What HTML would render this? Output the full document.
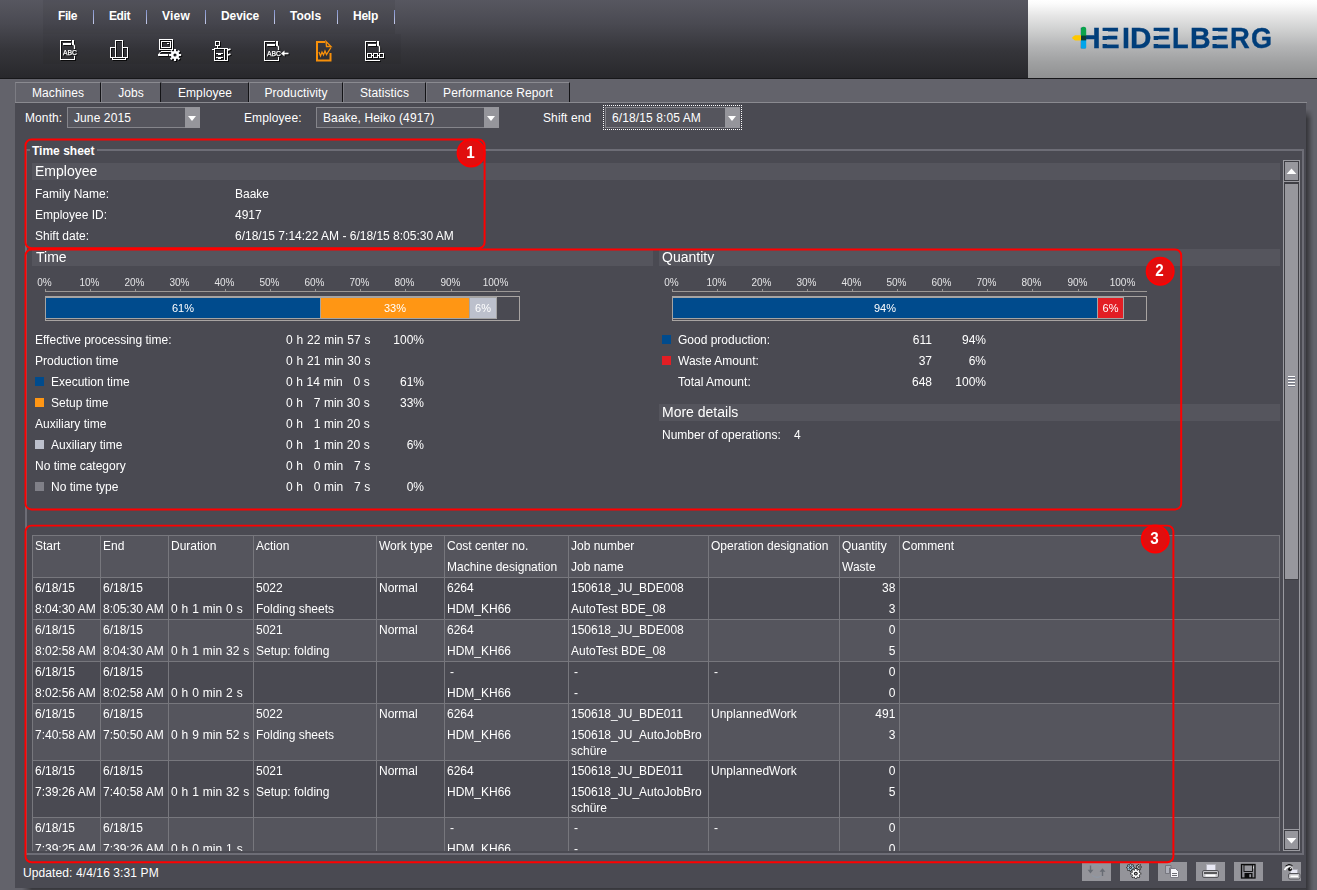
<!DOCTYPE html><html><head><meta charset="utf-8"><title>Time sheet</title><style>
*{margin:0;padding:0;box-sizing:border-box}
html,body{width:1317px;height:890px;overflow:hidden;background:#63636b}
body{font-family:"Liberation Sans",sans-serif;font-size:12px;line-height:14px;color:#fff;position:relative}
div,svg{position:absolute}
.t{white-space:pre;}
.b{font-weight:bold}
#hdr{left:0;top:0;width:1317px;height:79px;background:linear-gradient(#575760 0,#4a4a52 30%,#35353a 65%,#28282c 100%);border-bottom:1px solid #17171a}
#mb{left:43px;top:0;width:352px;height:34px;background:rgba(0,0,0,.06)}
#tb{left:43px;top:34px;width:358px;height:30px;background:rgba(0,0,0,.04)}
#logo{left:1028px;top:0;width:289px;height:79px;background:linear-gradient(#fff 0,#fbfbfb 5%,#e6e6e6 20%,#cdcece 40%,#b3b4b5 60%,#9fa0a1 80%,#909192 100%);border-bottom:1px solid #17171a}
.sep{background:linear-gradient(#8090cc,#c4cae8)}
.tab{letter-spacing:.1px;top:82px;height:21px;border:1px solid #8a8a90;border-left-color:#7c7c83;border-right-color:#131316;background:#63636b;text-align:center;line-height:21px;font-size:12px}
#panel{left:15px;top:103px;width:1291px;height:785px;background:#4a4a52}
#shr{left:1306px;top:109px;width:8px;height:781px;background:linear-gradient(to right,rgba(0,0,0,.46),rgba(0,0,0,.3) 35%,rgba(0,0,0,.1) 70%,rgba(0,0,0,0));-webkit-mask-image:linear-gradient(to bottom,transparent,#000 10px);mask-image:linear-gradient(to bottom,transparent,#000 10px)}
#shb{left:22px;top:888px;width:1284px;height:8px;background:linear-gradient(to bottom,rgba(0,0,0,.46),rgba(0,0,0,.3) 35%,rgba(0,0,0,.1) 70%,rgba(0,0,0,0));-webkit-mask-image:linear-gradient(to right,transparent,#000 10px);mask-image:linear-gradient(to right,transparent,#000 10px)}
#pt{left:15px;top:102px;width:1292px;height:1px;background:#8a8a90}
.sel{height:21px;border:1px solid #85858b;background:#55555d}
.sel i{position:absolute;right:-1px;top:-1px;width:15px;height:21px;background:#95959b}
.sel i:after{content:"";position:absolute;left:3px;top:9px;border:4.5px solid transparent;border-top:5px solid #fff;border-bottom:0}
.sh{height:16px;background:#55555d}
.red{border:2px solid #f00000;border-radius:7px}
.num{width:29px;height:29px;color:#fff;font-weight:bold;font-size:16px;line-height:29px;text-align:center;transform:scaleX(.95)}
.btn{top:862px;height:19px;width:29px;background:#94949a}
</style></head><body>
<div id="hdr"></div><div id="mb"></div><div id="tb"></div><div id="logo"></div>
<div class="t b" style="left:58px;top:9px;letter-spacing:-0.4px;">File</div>
<div class="t b" style="left:109px;top:9px;letter-spacing:-0.4px;">Edit</div>
<div class="t b" style="left:162px;top:9px;letter-spacing:0.2px;">View</div>
<div class="t b" style="left:221px;top:9px;letter-spacing:-0.1px;">Device</div>
<div class="t b" style="left:290px;top:9px;letter-spacing:0px;">Tools</div>
<div class="t b" style="left:353px;top:9px;letter-spacing:-0.25px;">Help</div>
<div class="sep" style="left:93px;top:10px;width:1px;height:14px;"></div>
<div class="sep" style="left:146px;top:10px;width:1px;height:14px;"></div>
<div class="sep" style="left:205px;top:10px;width:1px;height:14px;"></div>
<div class="sep" style="left:274px;top:10px;width:1px;height:14px;"></div>
<div class="sep" style="left:337px;top:10px;width:1px;height:14px;"></div>
<div class="sep" style="left:394px;top:10px;width:1px;height:14px;"></div>
<svg width="440" height="78" style="left:0;top:0;filter:drop-shadow(1px 1px 0 rgba(0,0,0,.75))" shape-rendering="crispEdges"><g transform="translate(60,40)" fill="none" stroke="#fff" stroke-width="1"><path d="M0.5 0 V19.5 H14.5 V16"/><path d="M0 0.5 H11"/><path d="M13 0 V4.5" stroke-width="2"/><path d="M13.5 4.5 L14.5 6 V9" shape-rendering="auto" stroke-width="1.3"/><rect x="3" y="3" width="7.5" height="2" fill="#fff" stroke="none"/><text x="3" y="15" font-family="Liberation Sans,sans-serif" font-size="7" fill="#fff" stroke="#fff" stroke-width=".25" textLength="14" lengthAdjust="spacingAndGlyphs">ABC</text></g><g fill="none" stroke="#fff" stroke-width="1"><rect x="115.5" y="40.5" width="7" height="17"/><path d="M115 47.5 H110.5 V57.5 H127.5 V47.5 H123"/><path d="M112.5 58 V59.5 H125.5 V58"/></g><g fill="none" stroke="#fff" stroke-width="1"><rect x="159.5" y="39.5" width="13" height="10" rx="1"/><rect x="161.5" y="41.5" width="9" height="6" rx="1"/><path d="M167 43.5 H169"/><path d="M161 51.5 H169.5"/><path d="M160.5 52 L158.5 54.5" shape-rendering="auto"/><path d="M158 55 H168" stroke-width="2"/></g><g style="filter:drop-shadow(0 0 .5px #222)"><path d="M181.11 53.93 L181.11 56.07 L179.08 55.98 L178.58 57.19 L180.07 58.57 L178.57 60.07 L177.19 58.58 L175.98 59.08 L176.07 61.11 L173.93 61.11 L174.02 59.08 L172.81 58.58 L171.43 60.07 L169.93 58.57 L171.42 57.19 L170.92 55.98 L168.89 56.07 L168.89 53.93 L170.92 54.02 L171.42 52.81 L169.93 51.43 L171.43 49.93 L172.81 51.42 L174.02 50.92 L173.93 48.89 L176.07 48.89 L175.98 50.92 L177.19 51.42 L178.57 49.93 L180.07 51.43 L178.58 52.81 L179.08 54.02Z M173.4 55 a1.6 1.6 0 1 0 3.2 0 a1.6 1.6 0 1 0 -3.2 0Z" fill="#fff" fill-rule="evenodd" shape-rendering="auto"/></g><g fill="none" stroke="#fff" stroke-width="1"><rect x="215.5" y="41.5" width="4" height="4"/><path d="M217.5 46 V48"/><rect x="214.5" y="48.5" width="13" height="12"/><path d="M224.5 48 V61"/><path d="M212.3 49.5 H214" stroke-width="1.6"/><path d="M228 50 L230.5 49 M228 55 L230.5 54" stroke-width="1.6" shape-rendering="auto"/><path d="M216 53.5 H223 M218 54.5 H221 M216 57.5 H223 M218 58.5 H221"/></g><g transform="translate(264,41)" fill="none" stroke="#fff" stroke-width="1"><path d="M0.5 0 V19.5 H14.5 V16"/><path d="M0 0.5 H11"/><path d="M13 0 V4.5" stroke-width="2"/><path d="M13.5 4.5 L14.5 6 V9" shape-rendering="auto" stroke-width="1.3"/><rect x="3" y="3" width="7.5" height="2" fill="#fff" stroke="none"/><text x="3" y="15" font-family="Liberation Sans,sans-serif" font-size="7" fill="#fff" stroke="#fff" stroke-width=".25" textLength="14" lengthAdjust="spacingAndGlyphs">ABC</text></g><path d="M281 53.5 L284.5 50.5 V56.5Z" fill="#fff" shape-rendering="auto"/><path d="M284 53.5 H288.5" stroke="#fff" stroke-width="1.6" shape-rendering="auto"/><g transform="translate(365,41)" fill="none" stroke="#fff" stroke-width="1"><path d="M0.5 0 V19.5 H15"/><path d="M0 0.5 H11"/><path d="M13 0 V4.5" stroke-width="2"/><path d="M13.5 4.5 L14.5 6 V11" shape-rendering="auto" stroke-width="1.3"/><rect x="3" y="3" width="7.5" height="2" fill="#fff" stroke="none"/><rect x="2.5" y="12.5" width="4" height="4"/><rect x="8.5" y="12.5" width="4" height="4"/><rect x="14.5" y="12.5" width="4" height="4"/><path d="M6 14.5 H9 M12 14.5 H15"/></g></svg><svg width="24" height="26" style="left:312px;top:38px" viewBox="312 38 24 26"><g fill="none" stroke="#f7900a" stroke-width="2"><path d="M325 42 H317 V60.5 H330.5 V53" stroke-linejoin="miter"/><path d="M326 41.5 L331 46.5 H326.5Z" stroke-width="1.3"/><path d="M319 52 L320.5 56 L322 52 L323.5 55 L325 51 L326.5 54.5 L331 47.5" stroke-width="1.3"/></g></svg>
<div id="wm" style="left:1028px;top:21px;width:289px;height:34px;will-change:transform;font-weight:bold;font-size:28.8px;line-height:34px;color:#003e7a;-webkit-text-stroke:0.35px #003e7a"><span style="position:absolute;left:51.01px;top:0;transform:translateY(-.25px) scaleX(1.043);transform-origin:0 0">H</span><span style="position:absolute;left:73.26px;top:0;transform:translateY(-.25px) scaleX(0.966);transform-origin:0 0">E</span><span style="position:absolute;left:93.50px;top:0;transform:translateY(-.25px) scaleX(0.997);transform-origin:0 0">I</span><span style="position:absolute;left:101.94px;top:0;transform:translateY(-.25px) scaleX(1.029);transform-origin:0 0">D</span><span style="position:absolute;left:123.71px;top:0;transform:translateY(-.25px) scaleX(0.991);transform-origin:0 0">E</span><span style="position:absolute;left:143.90px;top:0;transform:translateY(-.25px) scaleX(0.945);transform-origin:0 0">L</span><span style="position:absolute;left:161.82px;top:0;transform:translateY(-.25px) scaleX(0.989);transform-origin:0 0">B</span><span style="position:absolute;left:182.73px;top:0;transform:translateY(-.25px) scaleX(0.929);transform-origin:0 0">E</span><span style="position:absolute;left:202.49px;top:0;transform:translateY(-.25px) scaleX(0.950);transform-origin:0 0">R</span><span style="position:absolute;left:223.08px;top:0;transform:translateY(-.25px) scaleX(0.941);transform-origin:0 0">G</span></div>
<div style="left:1102.1px;top:31.45px;width:6.2px;height:4.35px;background:linear-gradient(#fff 0,#fbfbfb 5%,#e6e6e6 20%,#cdcece 40%,#b3b4b5 60%,#9fa0a1 80%,#909192 100%) 0 -31.45px/100% 78px no-repeat"></div>
<div style="left:1102.1px;top:39.65px;width:6.2px;height:4.55px;background:linear-gradient(#fff 0,#fbfbfb 5%,#e6e6e6 20%,#cdcece 40%,#b3b4b5 60%,#9fa0a1 80%,#909192 100%) 0 -39.65px/100% 78px no-repeat"></div>
<div style="left:1152.6px;top:31.45px;width:6.2px;height:4.35px;background:linear-gradient(#fff 0,#fbfbfb 5%,#e6e6e6 20%,#cdcece 40%,#b3b4b5 60%,#9fa0a1 80%,#909192 100%) 0 -31.45px/100% 78px no-repeat"></div>
<div style="left:1152.6px;top:39.65px;width:6.2px;height:4.55px;background:linear-gradient(#fff 0,#fbfbfb 5%,#e6e6e6 20%,#cdcece 40%,#b3b4b5 60%,#9fa0a1 80%,#909192 100%) 0 -39.65px/100% 78px no-repeat"></div>
<div style="left:1211.5px;top:31.45px;width:6.2px;height:4.35px;background:linear-gradient(#fff 0,#fbfbfb 5%,#e6e6e6 20%,#cdcece 40%,#b3b4b5 60%,#9fa0a1 80%,#909192 100%) 0 -31.45px/100% 78px no-repeat"></div>
<div style="left:1211.5px;top:39.65px;width:6.2px;height:4.55px;background:linear-gradient(#fff 0,#fbfbfb 5%,#e6e6e6 20%,#cdcece 40%,#b3b4b5 60%,#9fa0a1 80%,#909192 100%) 0 -39.65px/100% 78px no-repeat"></div>
<svg style="left:1068px;top:22px" width="24" height="32" viewBox="1068 22 24 32"><path d="M1082 35.2 H1075 L1072.3 37.2 V38.5 L1075 40.5 H1082Z" fill="#ffc800"/><rect x="1081" y="26.8" width="5.2" height="12" rx="2.6" fill="#0aa54b"/><rect x="1081" y="38" width="5.2" height="10.4" rx="0.8" fill="#00a5eb"/><rect x="1081" y="35.6" width="5.2" height="4.8" fill="#0c3c34"/></svg>
<div class="tab" style="left:15px;width:86px">Machines</div>
<div class="tab" style="left:101px;width:60px">Jobs</div>
<div class="tab" style="left:161px;width:88px;background:#4a4a52;border-left-color:#4a4a52">Employee</div>
<div class="tab" style="left:249px;width:94px">Productivity</div>
<div class="tab" style="left:343px;width:83px">Statistics</div>
<div class="tab" style="left:426px;width:144px">Performance Report</div>
<div id="shr"></div><div id="shb"></div><div id="panel"></div><div id="pt"></div>
<div class="t" style="left:25px;top:111px;letter-spacing:.1px;">Month:</div>
<div class="sel" style="left:67px;top:107px;width:133px"><i></i></div>
<div class="t" style="left:74px;top:111px;letter-spacing:.1px;">June 2015</div>
<div class="t" style="left:244px;top:111px;letter-spacing:.1px;">Employee:</div>
<div class="sel" style="left:316px;top:107px;width:183px"><i></i></div>
<div class="t" style="left:323px;top:111px;letter-spacing:.1px;">Baake, Heiko (4917)</div>
<div class="t" style="left:543px;top:111px;letter-spacing:.1px;">Shift end</div>
<div style="left:603px;top:105px;width:139px;height:25px;border:1px dotted #fff"></div>
<div class="sel" style="left:605px;top:107px;width:135px"><i></i></div>
<div class="t" style="left:612px;top:111px;letter-spacing:.1px;">6/18/15 8:05 AM</div>
<div style="left:25px;top:149px;width:1279px;height:706px;border:2px solid #6d6d76"></div>
<div style="left:30px;top:143px;width:67px;height:14px;background:#4a4a52;"></div>
<div class="t b" style="left:32px;top:144px;">Time sheet</div>
<div class="t" style="left:23px;top:866px;letter-spacing:.1px;">Updated: 4/4/16 3:31 PM</div>
<div id="rep" style="left:0;top:0;width:1317px;height:890px;will-change:transform">
<div class="sh" style="left:32px;top:163px;width:1248px;height:17px;"></div>
<div class="t" style="left:35px;top:163px;font-size:14px;line-height:16px;">Employee</div>
<div class="sh" style="left:32px;top:249px;width:621px;height:17px;"></div>
<div class="t" style="left:36px;top:249px;font-size:14px;line-height:16px;">Time</div>
<div class="sh" style="left:659px;top:249px;width:621px;height:17px;"></div>
<div class="t" style="left:662px;top:249px;font-size:14px;line-height:16px;">Quantity</div>
<div class="sh" style="left:659px;top:404px;width:621px;height:17px;"></div>
<div class="t" style="left:662px;top:404px;font-size:14px;line-height:16px;">More details</div>
<div class="t" style="left:35px;top:187px;">Family Name:</div>
<div class="t" style="left:235px;top:187px;">Baake</div>
<div class="t" style="left:35px;top:208px;">Employee ID:</div>
<div class="t" style="left:235px;top:208px;">4917</div>
<div class="t" style="left:35px;top:229px;">Shift date:</div>
<div class="t" style="left:235px;top:229px;">6/18/15 7:14:22 AM - 6/18/15 8:05:30 AM</div>
<div class="t" style="left:24px;top:277px;font-size:10px;line-height:12px;width:41px;text-align:center;color:#e4e4e6;">0%</div>
<div style="left:45px;top:289px;width:1px;height:2px;background:#9c9896;"></div>
<div class="t" style="left:69px;top:277px;font-size:10px;line-height:12px;width:41px;text-align:center;color:#e4e4e6;">10%</div>
<div style="left:90px;top:289px;width:1px;height:2px;background:#9c9896;"></div>
<div class="t" style="left:114px;top:277px;font-size:10px;line-height:12px;width:41px;text-align:center;color:#e4e4e6;">20%</div>
<div style="left:135px;top:289px;width:1px;height:2px;background:#9c9896;"></div>
<div class="t" style="left:159px;top:277px;font-size:10px;line-height:12px;width:41px;text-align:center;color:#e4e4e6;">30%</div>
<div style="left:180px;top:289px;width:1px;height:2px;background:#9c9896;"></div>
<div class="t" style="left:204px;top:277px;font-size:10px;line-height:12px;width:41px;text-align:center;color:#e4e4e6;">40%</div>
<div style="left:225px;top:289px;width:1px;height:2px;background:#9c9896;"></div>
<div class="t" style="left:249px;top:277px;font-size:10px;line-height:12px;width:41px;text-align:center;color:#e4e4e6;">50%</div>
<div style="left:270px;top:289px;width:1px;height:2px;background:#9c9896;"></div>
<div class="t" style="left:294px;top:277px;font-size:10px;line-height:12px;width:41px;text-align:center;color:#e4e4e6;">60%</div>
<div style="left:315px;top:289px;width:1px;height:2px;background:#9c9896;"></div>
<div class="t" style="left:339px;top:277px;font-size:10px;line-height:12px;width:41px;text-align:center;color:#e4e4e6;">70%</div>
<div style="left:360px;top:289px;width:1px;height:2px;background:#9c9896;"></div>
<div class="t" style="left:384px;top:277px;font-size:10px;line-height:12px;width:41px;text-align:center;color:#e4e4e6;">80%</div>
<div style="left:405px;top:289px;width:1px;height:2px;background:#9c9896;"></div>
<div class="t" style="left:430px;top:277px;font-size:10px;line-height:12px;width:41px;text-align:center;color:#e4e4e6;">90%</div>
<div style="left:451px;top:289px;width:1px;height:2px;background:#9c9896;"></div>
<div class="t" style="left:475px;top:277px;font-size:10px;line-height:12px;width:41px;text-align:center;color:#e4e4e6;">100%</div>
<div style="left:496px;top:289px;width:1px;height:2px;background:#9c9896;"></div>
<div style="left:45px;top:291px;width:475px;height:1px;background:#9c9896;"></div>
<div style="left:45px;top:296px;width:475px;height:25px;background:#4a4a52;border:1px solid #a8a4a2"></div>
<div style="left:45px;top:297px;width:276px;height:22px;background:#004b8d;border:1px solid #a4a4a4"></div>
<div class="t" style="left:46px;top:302px;font-size:11px;line-height:13px;width:274px;text-align:center;">61%</div>
<div style="left:320px;top:297px;width:150px;height:22px;background:#ff9614;border:1px solid #a4a4a4"></div>
<div class="t" style="left:321px;top:302px;font-size:11px;line-height:13px;width:148px;text-align:center;">33%</div>
<div style="left:469px;top:297px;width:28px;height:22px;background:#bcc0cc;border:1px solid #a4a4a4"></div>
<div class="t" style="left:470px;top:302px;font-size:11px;line-height:13px;width:26px;text-align:center;">6%</div>
<div class="t" style="left:651px;top:277px;font-size:10px;line-height:12px;width:41px;text-align:center;color:#e4e4e6;">0%</div>
<div style="left:672px;top:289px;width:1px;height:2px;background:#9c9896;"></div>
<div class="t" style="left:696px;top:277px;font-size:10px;line-height:12px;width:41px;text-align:center;color:#e4e4e6;">10%</div>
<div style="left:717px;top:289px;width:1px;height:2px;background:#9c9896;"></div>
<div class="t" style="left:741px;top:277px;font-size:10px;line-height:12px;width:41px;text-align:center;color:#e4e4e6;">20%</div>
<div style="left:762px;top:289px;width:1px;height:2px;background:#9c9896;"></div>
<div class="t" style="left:786px;top:277px;font-size:10px;line-height:12px;width:41px;text-align:center;color:#e4e4e6;">30%</div>
<div style="left:807px;top:289px;width:1px;height:2px;background:#9c9896;"></div>
<div class="t" style="left:831px;top:277px;font-size:10px;line-height:12px;width:41px;text-align:center;color:#e4e4e6;">40%</div>
<div style="left:852px;top:289px;width:1px;height:2px;background:#9c9896;"></div>
<div class="t" style="left:876px;top:277px;font-size:10px;line-height:12px;width:41px;text-align:center;color:#e4e4e6;">50%</div>
<div style="left:897px;top:289px;width:1px;height:2px;background:#9c9896;"></div>
<div class="t" style="left:921px;top:277px;font-size:10px;line-height:12px;width:41px;text-align:center;color:#e4e4e6;">60%</div>
<div style="left:942px;top:289px;width:1px;height:2px;background:#9c9896;"></div>
<div class="t" style="left:966px;top:277px;font-size:10px;line-height:12px;width:41px;text-align:center;color:#e4e4e6;">70%</div>
<div style="left:987px;top:289px;width:1px;height:2px;background:#9c9896;"></div>
<div class="t" style="left:1011px;top:277px;font-size:10px;line-height:12px;width:41px;text-align:center;color:#e4e4e6;">80%</div>
<div style="left:1032px;top:289px;width:1px;height:2px;background:#9c9896;"></div>
<div class="t" style="left:1057px;top:277px;font-size:10px;line-height:12px;width:41px;text-align:center;color:#e4e4e6;">90%</div>
<div style="left:1078px;top:289px;width:1px;height:2px;background:#9c9896;"></div>
<div class="t" style="left:1102px;top:277px;font-size:10px;line-height:12px;width:41px;text-align:center;color:#e4e4e6;">100%</div>
<div style="left:1123px;top:289px;width:1px;height:2px;background:#9c9896;"></div>
<div style="left:672px;top:291px;width:475px;height:1px;background:#9c9896;"></div>
<div style="left:672px;top:296px;width:475px;height:25px;background:#4a4a52;border:1px solid #a8a4a2"></div>
<div style="left:672px;top:297px;width:426px;height:22px;background:#004b8d;border:1px solid #a4a4a4"></div>
<div class="t" style="left:673px;top:302px;font-size:11px;line-height:13px;width:424px;text-align:center;">94%</div>
<div style="left:1097px;top:297px;width:27px;height:22px;background:#e31e24;border:1px solid #a4a4a4"></div>
<div class="t" style="left:1098px;top:302px;font-size:11px;line-height:13px;width:25px;text-align:center;">6%</div>
<div class="t" style="left:35px;top:333px;">Effective processing time:</div>
<div class="t" style="left:286px;top:333px;word-spacing:0.5px;">0 h 22 min 57 s</div>
<div class="t" style="left:374px;top:333px;width:50px;text-align:right;">100%</div>
<div class="t" style="left:35px;top:354px;">Production time</div>
<div class="t" style="left:286px;top:354px;word-spacing:0.5px;">0 h 21 min 30 s</div>
<div style="left:35px;top:377px;width:9px;height:9px;background:#004b8d;"></div>
<div class="t" style="left:51px;top:375px;">Execution time</div>
<div class="t" style="left:286px;top:375px;word-spacing:0.25px;">0 h 14 min   0 s</div>
<div class="t" style="left:374px;top:375px;width:50px;text-align:right;">61%</div>
<div style="left:35px;top:398px;width:9px;height:9px;background:#ff9614;"></div>
<div class="t" style="left:51px;top:396px;">Setup time</div>
<div class="t" style="left:286px;top:396px;word-spacing:0.25px;">0 h   7 min 30 s</div>
<div class="t" style="left:374px;top:396px;width:50px;text-align:right;">33%</div>
<div class="t" style="left:35px;top:417px;">Auxiliary time</div>
<div class="t" style="left:286px;top:417px;word-spacing:0.25px;">0 h   1 min 20 s</div>
<div style="left:35px;top:440px;width:9px;height:9px;background:#bcc0cc;"></div>
<div class="t" style="left:51px;top:438px;">Auxiliary time</div>
<div class="t" style="left:286px;top:438px;word-spacing:0.25px;">0 h   1 min 20 s</div>
<div class="t" style="left:374px;top:438px;width:50px;text-align:right;">6%</div>
<div class="t" style="left:35px;top:459px;">No time category</div>
<div class="t" style="left:286px;top:459px;word-spacing:0.25px;">0 h   0 min   7 s</div>
<div style="left:35px;top:482px;width:9px;height:9px;background:#808088;"></div>
<div class="t" style="left:51px;top:480px;">No time type</div>
<div class="t" style="left:286px;top:480px;word-spacing:0.25px;">0 h   0 min   7 s</div>
<div class="t" style="left:374px;top:480px;width:50px;text-align:right;">0%</div>
<div style="left:662px;top:335px;width:9px;height:9px;background:#004b8d;"></div>
<div class="t" style="left:678px;top:333px;">Good production:</div>
<div class="t" style="left:882px;top:333px;width:50px;text-align:right;">611</div>
<div class="t" style="left:936px;top:333px;width:50px;text-align:right;">94%</div>
<div style="left:662px;top:356px;width:9px;height:9px;background:#e31e24;"></div>
<div class="t" style="left:678px;top:354px;">Waste Amount:</div>
<div class="t" style="left:882px;top:354px;width:50px;text-align:right;">37</div>
<div class="t" style="left:936px;top:354px;width:50px;text-align:right;">6%</div>
<div class="t" style="left:678px;top:375px;">Total Amount:</div>
<div class="t" style="left:882px;top:375px;width:50px;text-align:right;">648</div>
<div class="t" style="left:936px;top:375px;width:50px;text-align:right;">100%</div>
<div class="t" style="left:662px;top:428px;">Number of operations:</div>
<div class="t" style="left:794px;top:428px;">4</div>
<div style="left:32px;top:535px;width:1248px;height:316px;overflow:hidden">
<div style="left:0px;top:0px;width:69px;height:43px;border:1px solid #77777d;background:#55555d"></div>
<div class="t" style="left:3px;top:4px;">Start</div>
<div style="left:68px;top:0px;width:69px;height:43px;border:1px solid #77777d;background:#55555d"></div>
<div class="t" style="left:71px;top:4px;">End</div>
<div style="left:136px;top:0px;width:86px;height:43px;border:1px solid #77777d;background:#55555d"></div>
<div class="t" style="left:139px;top:4px;word-spacing:.6px;">Duration</div>
<div style="left:221px;top:0px;width:124px;height:43px;border:1px solid #77777d;background:#55555d"></div>
<div class="t" style="left:224px;top:4px;">Action</div>
<div style="left:344px;top:0px;width:69px;height:43px;border:1px solid #77777d;background:#55555d"></div>
<div class="t" style="left:347px;top:4px;">Work type</div>
<div style="left:412px;top:0px;width:125px;height:43px;border:1px solid #77777d;background:#55555d"></div>
<div class="t" style="left:415px;top:4px;">Cost center no.</div>
<div class="t" style="left:415px;top:25px;">Machine designation</div>
<div style="left:536px;top:0px;width:141px;height:43px;border:1px solid #77777d;background:#55555d"></div>
<div class="t" style="left:539px;top:4px;">Job number</div>
<div class="t" style="left:539px;top:25px;">Job name</div>
<div style="left:676px;top:0px;width:132px;height:43px;border:1px solid #77777d;background:#55555d"></div>
<div class="t" style="left:679px;top:4px;">Operation designation</div>
<div style="left:807px;top:0px;width:61px;height:43px;border:1px solid #77777d;background:#55555d"></div>
<div class="t" style="left:810px;top:4px;">Quantity</div>
<div class="t" style="left:810px;top:25px;">Waste</div>
<div style="left:867px;top:0px;width:381px;height:43px;border:1px solid #77777d;background:#55555d"></div>
<div class="t" style="left:870px;top:4px;">Comment</div>
<div style="left:0px;top:42px;width:69px;height:43px;border:1px solid #77777d;background:#4a4a52"></div>
<div class="t" style="left:3px;top:46px;">6/18/15</div>
<div class="t" style="left:3px;top:67px;">8:04:30 AM</div>
<div style="left:68px;top:42px;width:69px;height:43px;border:1px solid #77777d;background:#4a4a52"></div>
<div class="t" style="left:71px;top:46px;">6/18/15</div>
<div class="t" style="left:71px;top:67px;">8:05:30 AM</div>
<div style="left:136px;top:42px;width:86px;height:43px;border:1px solid #77777d;background:#4a4a52"></div>
<div class="t" style="left:139px;top:67px;word-spacing:.6px;">0 h 1 min 0 s</div>
<div style="left:221px;top:42px;width:124px;height:43px;border:1px solid #77777d;background:#4a4a52"></div>
<div class="t" style="left:224px;top:46px;">5022</div>
<div class="t" style="left:224px;top:67px;">Folding sheets</div>
<div style="left:344px;top:42px;width:69px;height:43px;border:1px solid #77777d;background:#4a4a52"></div>
<div class="t" style="left:347px;top:46px;">Normal</div>
<div style="left:412px;top:42px;width:125px;height:43px;border:1px solid #77777d;background:#4a4a52"></div>
<div class="t" style="left:415px;top:46px;">6264</div>
<div class="t" style="left:415px;top:67px;">HDM_KH66</div>
<div style="left:536px;top:42px;width:141px;height:43px;border:1px solid #77777d;background:#4a4a52"></div>
<div class="t" style="left:539px;top:46px;">150618_JU_BDE008</div>
<div class="t" style="left:539px;top:67px;">AutoTest BDE_08</div>
<div style="left:676px;top:42px;width:132px;height:43px;border:1px solid #77777d;background:#4a4a52"></div>
<div style="left:807px;top:42px;width:61px;height:43px;border:1px solid #77777d;background:#4a4a52"></div>
<div class="t" style="left:807px;top:46px;width:56.4px;text-align:right;">38</div>
<div class="t" style="left:807px;top:67px;width:56.4px;text-align:right;">3</div>
<div style="left:867px;top:42px;width:381px;height:43px;border:1px solid #77777d;background:#4a4a52"></div>
<div style="left:0px;top:84px;width:69px;height:43px;border:1px solid #77777d;background:#55555d"></div>
<div class="t" style="left:3px;top:88px;">6/18/15</div>
<div class="t" style="left:3px;top:109px;">8:02:58 AM</div>
<div style="left:68px;top:84px;width:69px;height:43px;border:1px solid #77777d;background:#55555d"></div>
<div class="t" style="left:71px;top:88px;">6/18/15</div>
<div class="t" style="left:71px;top:109px;">8:04:30 AM</div>
<div style="left:136px;top:84px;width:86px;height:43px;border:1px solid #77777d;background:#55555d"></div>
<div class="t" style="left:139px;top:109px;word-spacing:.6px;">0 h 1 min 32 s</div>
<div style="left:221px;top:84px;width:124px;height:43px;border:1px solid #77777d;background:#55555d"></div>
<div class="t" style="left:224px;top:88px;">5021</div>
<div class="t" style="left:224px;top:109px;">Setup: folding</div>
<div style="left:344px;top:84px;width:69px;height:43px;border:1px solid #77777d;background:#55555d"></div>
<div class="t" style="left:347px;top:88px;">Normal</div>
<div style="left:412px;top:84px;width:125px;height:43px;border:1px solid #77777d;background:#55555d"></div>
<div class="t" style="left:415px;top:88px;">6264</div>
<div class="t" style="left:415px;top:109px;">HDM_KH66</div>
<div style="left:536px;top:84px;width:141px;height:43px;border:1px solid #77777d;background:#55555d"></div>
<div class="t" style="left:539px;top:88px;">150618_JU_BDE008</div>
<div class="t" style="left:539px;top:109px;">AutoTest BDE_08</div>
<div style="left:676px;top:84px;width:132px;height:43px;border:1px solid #77777d;background:#55555d"></div>
<div style="left:807px;top:84px;width:61px;height:43px;border:1px solid #77777d;background:#55555d"></div>
<div class="t" style="left:807px;top:88px;width:56.4px;text-align:right;">0</div>
<div class="t" style="left:807px;top:109px;width:56.4px;text-align:right;">5</div>
<div style="left:867px;top:84px;width:381px;height:43px;border:1px solid #77777d;background:#55555d"></div>
<div style="left:0px;top:126px;width:69px;height:43px;border:1px solid #77777d;background:#4a4a52"></div>
<div class="t" style="left:3px;top:130px;">6/18/15</div>
<div class="t" style="left:3px;top:151px;">8:02:56 AM</div>
<div style="left:68px;top:126px;width:69px;height:43px;border:1px solid #77777d;background:#4a4a52"></div>
<div class="t" style="left:71px;top:130px;">6/18/15</div>
<div class="t" style="left:71px;top:151px;">8:02:58 AM</div>
<div style="left:136px;top:126px;width:86px;height:43px;border:1px solid #77777d;background:#4a4a52"></div>
<div class="t" style="left:139px;top:151px;word-spacing:.6px;">0 h 0 min 2 s</div>
<div style="left:221px;top:126px;width:124px;height:43px;border:1px solid #77777d;background:#4a4a52"></div>
<div style="left:344px;top:126px;width:69px;height:43px;border:1px solid #77777d;background:#4a4a52"></div>
<div style="left:412px;top:126px;width:125px;height:43px;border:1px solid #77777d;background:#4a4a52"></div>
<div class="t" style="left:418px;top:130px;">-</div>
<div class="t" style="left:415px;top:151px;">HDM_KH66</div>
<div style="left:536px;top:126px;width:141px;height:43px;border:1px solid #77777d;background:#4a4a52"></div>
<div class="t" style="left:542px;top:130px;">-</div>
<div class="t" style="left:542px;top:151px;">-</div>
<div style="left:676px;top:126px;width:132px;height:43px;border:1px solid #77777d;background:#4a4a52"></div>
<div class="t" style="left:682px;top:130px;">-</div>
<div style="left:807px;top:126px;width:61px;height:43px;border:1px solid #77777d;background:#4a4a52"></div>
<div class="t" style="left:807px;top:130px;width:56.4px;text-align:right;">0</div>
<div class="t" style="left:807px;top:151px;width:56.4px;text-align:right;">0</div>
<div style="left:867px;top:126px;width:381px;height:43px;border:1px solid #77777d;background:#4a4a52"></div>
<div style="left:0px;top:168px;width:69px;height:58px;border:1px solid #77777d;background:#55555d"></div>
<div class="t" style="left:3px;top:172px;">6/18/15</div>
<div class="t" style="left:3px;top:193px;">7:40:58 AM</div>
<div style="left:68px;top:168px;width:69px;height:58px;border:1px solid #77777d;background:#55555d"></div>
<div class="t" style="left:71px;top:172px;">6/18/15</div>
<div class="t" style="left:71px;top:193px;">7:50:50 AM</div>
<div style="left:136px;top:168px;width:86px;height:58px;border:1px solid #77777d;background:#55555d"></div>
<div class="t" style="left:139px;top:193px;word-spacing:.6px;">0 h 9 min 52 s</div>
<div style="left:221px;top:168px;width:124px;height:58px;border:1px solid #77777d;background:#55555d"></div>
<div class="t" style="left:224px;top:172px;">5022</div>
<div class="t" style="left:224px;top:193px;">Folding sheets</div>
<div style="left:344px;top:168px;width:69px;height:58px;border:1px solid #77777d;background:#55555d"></div>
<div class="t" style="left:347px;top:172px;">Normal</div>
<div style="left:412px;top:168px;width:125px;height:58px;border:1px solid #77777d;background:#55555d"></div>
<div class="t" style="left:415px;top:172px;">6264</div>
<div class="t" style="left:415px;top:193px;">HDM_KH66</div>
<div style="left:536px;top:168px;width:141px;height:58px;border:1px solid #77777d;background:#55555d"></div>
<div class="t" style="left:539px;top:172px;">150618_JU_BDE011</div>
<div class="t" style="left:539px;top:193px;">150618_JU_AutoJobBro</div>
<div class="t" style="left:539px;top:209px;">schüre</div>
<div style="left:676px;top:168px;width:132px;height:58px;border:1px solid #77777d;background:#55555d"></div>
<div class="t" style="left:679px;top:172px;">UnplannedWork</div>
<div style="left:807px;top:168px;width:61px;height:58px;border:1px solid #77777d;background:#55555d"></div>
<div class="t" style="left:807px;top:172px;width:56.4px;text-align:right;">491</div>
<div class="t" style="left:807px;top:193px;width:56.4px;text-align:right;">3</div>
<div style="left:867px;top:168px;width:381px;height:58px;border:1px solid #77777d;background:#55555d"></div>
<div style="left:0px;top:225px;width:69px;height:58px;border:1px solid #77777d;background:#4a4a52"></div>
<div class="t" style="left:3px;top:229px;">6/18/15</div>
<div class="t" style="left:3px;top:250px;">7:39:26 AM</div>
<div style="left:68px;top:225px;width:69px;height:58px;border:1px solid #77777d;background:#4a4a52"></div>
<div class="t" style="left:71px;top:229px;">6/18/15</div>
<div class="t" style="left:71px;top:250px;">7:40:58 AM</div>
<div style="left:136px;top:225px;width:86px;height:58px;border:1px solid #77777d;background:#4a4a52"></div>
<div class="t" style="left:139px;top:250px;word-spacing:.6px;">0 h 1 min 32 s</div>
<div style="left:221px;top:225px;width:124px;height:58px;border:1px solid #77777d;background:#4a4a52"></div>
<div class="t" style="left:224px;top:229px;">5021</div>
<div class="t" style="left:224px;top:250px;">Setup: folding</div>
<div style="left:344px;top:225px;width:69px;height:58px;border:1px solid #77777d;background:#4a4a52"></div>
<div class="t" style="left:347px;top:229px;">Normal</div>
<div style="left:412px;top:225px;width:125px;height:58px;border:1px solid #77777d;background:#4a4a52"></div>
<div class="t" style="left:415px;top:229px;">6264</div>
<div class="t" style="left:415px;top:250px;">HDM_KH66</div>
<div style="left:536px;top:225px;width:141px;height:58px;border:1px solid #77777d;background:#4a4a52"></div>
<div class="t" style="left:539px;top:229px;">150618_JU_BDE011</div>
<div class="t" style="left:539px;top:250px;">150618_JU_AutoJobBro</div>
<div class="t" style="left:539px;top:266px;">schüre</div>
<div style="left:676px;top:225px;width:132px;height:58px;border:1px solid #77777d;background:#4a4a52"></div>
<div class="t" style="left:679px;top:229px;">UnplannedWork</div>
<div style="left:807px;top:225px;width:61px;height:58px;border:1px solid #77777d;background:#4a4a52"></div>
<div class="t" style="left:807px;top:229px;width:56.4px;text-align:right;">0</div>
<div class="t" style="left:807px;top:250px;width:56.4px;text-align:right;">5</div>
<div style="left:867px;top:225px;width:381px;height:58px;border:1px solid #77777d;background:#4a4a52"></div>
<div style="left:0px;top:282px;width:69px;height:36px;border:1px solid #77777d;background:#55555d"></div>
<div class="t" style="left:3px;top:286px;">6/18/15</div>
<div class="t" style="left:3px;top:307px;">7:39:25 AM</div>
<div style="left:68px;top:282px;width:69px;height:36px;border:1px solid #77777d;background:#55555d"></div>
<div class="t" style="left:71px;top:286px;">6/18/15</div>
<div class="t" style="left:71px;top:307px;">7:39:26 AM</div>
<div style="left:136px;top:282px;width:86px;height:36px;border:1px solid #77777d;background:#55555d"></div>
<div class="t" style="left:139px;top:307px;word-spacing:.6px;">0 h 0 min 1 s</div>
<div style="left:221px;top:282px;width:124px;height:36px;border:1px solid #77777d;background:#55555d"></div>
<div style="left:344px;top:282px;width:69px;height:36px;border:1px solid #77777d;background:#55555d"></div>
<div style="left:412px;top:282px;width:125px;height:36px;border:1px solid #77777d;background:#55555d"></div>
<div class="t" style="left:418px;top:286px;">-</div>
<div class="t" style="left:415px;top:307px;">HDM_KH66</div>
<div style="left:536px;top:282px;width:141px;height:36px;border:1px solid #77777d;background:#55555d"></div>
<div class="t" style="left:542px;top:286px;">-</div>
<div class="t" style="left:542px;top:307px;">-</div>
<div style="left:676px;top:282px;width:132px;height:36px;border:1px solid #77777d;background:#55555d"></div>
<div class="t" style="left:682px;top:286px;">-</div>
<div style="left:807px;top:282px;width:61px;height:36px;border:1px solid #77777d;background:#55555d"></div>
<div class="t" style="left:807px;top:286px;width:56.4px;text-align:right;">0</div>
<div class="t" style="left:807px;top:307px;width:56.4px;text-align:right;">0</div>
<div style="left:867px;top:282px;width:381px;height:36px;border:1px solid #77777d;background:#55555d"></div>
</div>
</div>
<div style="left:1283px;top:160px;width:17px;height:691px;background:#4a4a52;border:1px solid #9a9aa0"></div>
<div style="left:1284px;top:161px;width:15px;height:20px;background:#97979d;border:1px solid #3f3f45"></div>
<div style="left:1284px;top:181px;width:15px;height:1px;background:#9a9aa0;"></div>
<div style="left:1284px;top:182px;width:15px;height:398px;background:#97979d;border:1px solid #3f3f45;border-top-width:2px"></div>
<div style="left:1284px;top:829px;width:15px;height:1px;background:#9a9aa0;"></div>
<div style="left:1284px;top:830px;width:15px;height:20px;background:#97979d;border:1px solid #3f3f45"></div>
<svg style="left:1286px;top:168px" width="11" height="7"><path d="M0.6 6 L5.5 0.6 L10.4 6Z" fill="#fff"/></svg>
<svg style="left:1286px;top:837px" width="11" height="7"><path d="M0.6 1 L5.5 6.4 L10.4 1Z" fill="#fff"/></svg>
<div style="left:1288px;top:376px;width:7px;height:1px;background:#fff;"></div>
<div style="left:1288px;top:377px;width:7px;height:1px;background:#767a88;"></div>
<div style="left:1288px;top:379px;width:7px;height:1px;background:#fff;"></div>
<div style="left:1288px;top:380px;width:7px;height:1px;background:#767a88;"></div>
<div style="left:1288px;top:382px;width:7px;height:1px;background:#fff;"></div>
<div style="left:1288px;top:383px;width:7px;height:1px;background:#767a88;"></div>
<div style="left:1288px;top:385px;width:7px;height:1px;background:#fff;"></div>
<div style="left:1288px;top:386px;width:7px;height:1px;background:#767a88;"></div>
<div class="btn" style="left:1082px;top:862px;width:29px;height:19px;"></div>
<div class="btn" style="left:1120px;top:862px;width:29px;height:19px;"></div>
<div class="btn" style="left:1158px;top:862px;width:29px;height:19px;"></div>
<div class="btn" style="left:1196px;top:862px;width:29px;height:19px;"></div>
<div class="btn" style="left:1234px;top:862px;width:29px;height:19px;"></div>
<div class="btn" style="left:1282px;top:862px;width:19px;height:19px;"></div>
<svg width="237" height="28" viewBox="1076 856 237 28" style="left:1076px;top:856px"><g fill="none" stroke="#686c74" stroke-width="1.4"><path d="M1090.5 865.5 V871"/><path d="M1087.6 869.8 L1090.5 873.4 L1093.4 869.8Z" fill="#686c74" stroke="none"/><path d="M1102.5 876 V870.5"/><path d="M1099.6 871.8 L1102.5 868.2 L1105.4 871.8Z" fill="#686c74" stroke="none"/><path d="M1092.3 875.2 A6.2 6.2 0 0 0 1101.3 875.6 M1091.8 866.6 A6.2 6.2 0 0 1 1100.6 866" stroke="#8d9aac" stroke-width="0.8"/></g><path d="M1134.64 866.88 L1134.64 868.32 L1133.61 868.35 L1133.23 869.27 L1133.94 870.02 L1132.92 871.04 L1132.17 870.33 L1131.25 870.71 L1131.22 871.74 L1129.78 871.74 L1129.75 870.71 L1128.83 870.33 L1128.08 871.04 L1127.06 870.02 L1127.77 869.27 L1127.39 868.35 L1126.36 868.32 L1126.36 866.88 L1127.39 866.85 L1127.77 865.93 L1127.06 865.18 L1128.08 864.16 L1128.83 864.87 L1129.75 864.49 L1129.78 863.46 L1131.22 863.46 L1131.25 864.49 L1132.17 864.87 L1132.92 864.16 L1133.94 865.18 L1133.23 865.93 L1133.61 866.85Z M1130.49 867.6 a0.01 0.01 0 1 0 0.02 0 a0.01 0.01 0 1 0 -0.02 0Z" fill="#161616" fill-rule="evenodd" shape-rendering="auto"/><path d="M1133.75 867.03 L1133.75 868.17 L1132.74 868.14 L1132.46 868.80 L1133.20 869.50 L1132.40 870.30 L1131.70 869.56 L1131.04 869.84 L1131.07 870.85 L1129.93 870.85 L1129.96 869.84 L1129.30 869.56 L1128.60 870.30 L1127.80 869.50 L1128.54 868.80 L1128.26 868.14 L1127.25 868.17 L1127.25 867.03 L1128.26 867.06 L1128.54 866.40 L1127.80 865.70 L1128.60 864.90 L1129.30 865.64 L1129.96 865.36 L1129.93 864.35 L1131.07 864.35 L1131.04 865.36 L1131.70 865.64 L1132.40 864.90 L1133.20 865.70 L1132.46 866.40 L1132.74 867.06Z M1130.49 867.6 a0.01 0.01 0 1 0 0.02 0 a0.01 0.01 0 1 0 -0.02 0Z" fill="#a6cce0" fill-rule="evenodd" shape-rendering="auto"/><circle cx="1130.5" cy="867.6" r="1.4" fill="#161616"/><circle cx="1130.5" cy="867.6" r="0.7" fill="#b8b8be"/><path d="M1141.94 866.39 L1141.94 867.61 L1141.12 867.61 L1140.76 868.35 L1141.27 869.00 L1140.32 869.76 L1139.80 869.11 L1139.00 869.30 L1138.82 870.10 L1137.63 869.83 L1137.81 869.03 L1137.17 868.51 L1136.43 868.87 L1135.90 867.77 L1136.64 867.41 L1136.64 866.59 L1135.90 866.23 L1136.43 865.13 L1137.17 865.49 L1137.81 864.97 L1137.63 864.17 L1138.82 863.90 L1139.00 864.70 L1139.80 864.89 L1140.32 864.24 L1141.27 865.00 L1140.76 865.65 L1141.12 866.39Z M1138.89 867.0 a0.01 0.01 0 1 0 0.02 0 a0.01 0.01 0 1 0 -0.02 0Z" fill="#161616" fill-rule="evenodd" shape-rendering="auto"/><path d="M1141.06 866.57 L1141.06 867.43 L1140.25 867.37 L1140.03 867.82 L1140.58 868.42 L1139.91 868.96 L1139.45 868.29 L1138.96 868.40 L1138.84 869.20 L1138.00 869.01 L1138.24 868.23 L1137.85 867.92 L1137.14 868.32 L1136.77 867.55 L1137.52 867.25 L1137.52 866.75 L1136.77 866.45 L1137.14 865.68 L1137.85 866.08 L1138.24 865.77 L1138.00 864.99 L1138.84 864.80 L1138.96 865.60 L1139.45 865.71 L1139.91 865.04 L1140.58 865.58 L1140.03 866.18 L1140.25 866.63Z M1138.89 867.0 a0.01 0.01 0 1 0 0.02 0 a0.01 0.01 0 1 0 -0.02 0Z" fill="#d4d4d8" fill-rule="evenodd" shape-rendering="auto"/><circle cx="1138.9" cy="867.0" r="1.0" fill="#161616"/><circle cx="1138.9" cy="867.0" r="0.5" fill="#b8b8be"/><path d="M1141.22 872.65 L1141.22 874.55 L1139.98 874.60 L1139.47 875.85 L1140.30 876.76 L1138.96 878.10 L1138.05 877.27 L1136.80 877.78 L1136.75 879.02 L1134.85 879.02 L1134.80 877.78 L1133.55 877.27 L1132.64 878.10 L1131.30 876.76 L1132.13 875.85 L1131.62 874.60 L1130.38 874.55 L1130.38 872.65 L1131.62 872.60 L1132.13 871.35 L1131.30 870.44 L1132.64 869.10 L1133.55 869.93 L1134.80 869.42 L1134.85 868.18 L1136.75 868.18 L1136.80 869.42 L1138.05 869.93 L1138.96 869.10 L1140.30 870.44 L1139.47 871.35 L1139.98 872.60Z M1135.79 873.6 a0.01 0.01 0 1 0 0.02 0 a0.01 0.01 0 1 0 -0.02 0Z" fill="#161616" fill-rule="evenodd" shape-rendering="auto"/><path d="M1140.33 872.81 L1140.33 874.39 L1139.11 874.39 L1138.70 875.38 L1139.56 876.25 L1138.45 877.36 L1137.58 876.50 L1136.59 876.91 L1136.59 878.13 L1135.01 878.13 L1135.01 876.91 L1134.02 876.50 L1133.15 877.36 L1132.04 876.25 L1132.90 875.38 L1132.49 874.39 L1131.27 874.39 L1131.27 872.81 L1132.49 872.81 L1132.90 871.82 L1132.04 870.95 L1133.15 869.84 L1134.02 870.70 L1135.01 870.29 L1135.01 869.07 L1136.59 869.07 L1136.59 870.29 L1137.58 870.70 L1138.45 869.84 L1139.56 870.95 L1138.70 871.82 L1139.11 872.81Z M1135.79 873.6 a0.01 0.01 0 1 0 0.02 0 a0.01 0.01 0 1 0 -0.02 0Z" fill="#ffffff" fill-rule="evenodd" shape-rendering="auto"/><circle cx="1135.8" cy="873.6" r="1.9" fill="#161616"/><circle cx="1135.8" cy="873.6" r="0.95" fill="#b8b8be"/><path d="M1165.5 865.5 H1171 V868 H1169.5 V873.5 H1165.5Z" fill="#aeb0ba" stroke="#6c6c74" stroke-width=".8"/><path d="M1170.5 868.5 H1175.5 L1178.5 871.5 V877.5 H1170.5Z" fill="#f4f4f8" stroke="#7c7c86" stroke-width="1"/><path d="M1172 873.5 H1177 M1172 875.5 H1177" stroke="#6c6c74" stroke-width="1"/><rect x="1206.5" y="864.5" width="9" height="7" fill="#e8e8f4" stroke="#b0b0b8" stroke-width=".8"/><rect x="1202.5" y="870.5" width="16" height="7" rx="1.5" fill="#c4c4c8" stroke="#55555a" stroke-width="1"/><path d="M1204 873 H1217" stroke="#111" stroke-width="1.2"/><rect x="1205.5" y="874.5" width="10" height="2" fill="#fff"/><rect x="1241.5" y="864.5" width="13.5" height="13.5" fill="#8e8e94" stroke="#0c0c0c" stroke-width="1.3"/><rect x="1244" y="865" width="8.5" height="6.5" fill="#97979d" stroke="#0c0c0c" stroke-width=".9"/><rect x="1244.5" y="873" width="8" height="5" fill="#0c0c0c"/><rect x="1249.3" y="874.2" width="1.8" height="3" fill="#97979d"/><rect x="1253" y="866.5" width="1" height="2" fill="#ddd"/><rect x="1290.5" y="869.5" width="7" height="6" fill="#e8e8f4" stroke="#b0b0b8" stroke-width=".8"/><rect x="1288.5" y="873.5" width="11.5" height="5.5" rx="1.5" fill="#c4c4c8" stroke="#55555a" stroke-width="1"/><rect x="1290.5" y="875.5" width="7.5" height="1.6" fill="#fff"/><path d="M1284.5 870 Q1288 864.5 1292.5 868.5" fill="none" stroke="#fff" stroke-width="1.6"/><path d="M1285.5 866 Q1289 863 1292.5 865.5" fill="none" stroke="#111" stroke-width="1"/><circle cx="1290" cy="869.2" r="1.9" fill="#0a0a0a"/><circle cx="1290.6" cy="868.6" r=".6" fill="#fff"/></svg>
<svg width="1317" height="890" style="left:0;top:0" fill="none" stroke="#ff0000" stroke-width="1.95"><rect x="25.5" y="139.5" width="459.1" height="108.8" rx="6"/><rect x="25.5" y="249.5" width="1155.7" height="259.9" rx="6"/><rect x="25.5" y="525.6" width="1147.9" height="336.6" rx="6"/><g fill="#e00e0e" stroke-width="2"><circle cx="471.1" cy="153" r="13.5"/><circle cx="1160.2" cy="271.2" r="13.5"/><circle cx="1155.3" cy="539" r="13.5"/></g></svg>
<div class="num" style="left:456px;top:138px">1</div>
<div class="num" style="left:1145px;top:256px">2</div>
<div class="num" style="left:1140px;top:524px">3</div>
</body></html>
